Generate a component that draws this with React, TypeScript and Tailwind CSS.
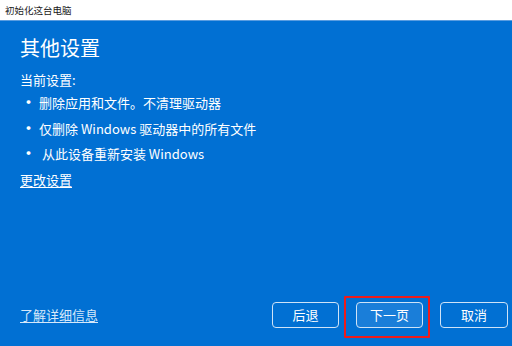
export default function App() {
  const font = { fontFamily: '"Segoe UI", "Noto Sans CJK SC", "Noto Sans", sans-serif' };
  return (
    <div className="flex h-[346px] w-[512px] flex-col overflow-hidden" style={font}>
      <div className="flex h-[20px] items-center bg-white pl-[5px] text-[9.5px] text-[#1a1a1a]">
        初始化这台电脑
      </div>
      <div className="flex flex-1 flex-col border-t border-[#5a9de0] bg-[#0170d3] pl-[20px] pr-[4px] text-white">
        <h1 className="mt-[13px] text-[20px] leading-[28px]">其他设置</h1>
        <div className="mt-[9px] flex flex-col text-[13px] leading-[25.5px]">
          <span className="leading-[18px]">当前设置:</span>
          <span className="mt-[1px]">
            <span className="mr-[3px] ml-[1px] text-[15px] font-bold leading-none">•</span>删除应用和文件。不清理驱动器
          </span>
          <span>
            <span className="mr-[3px] ml-[1px] text-[15px] font-bold leading-none">•</span>仅删除 Windows 驱动器中的所有文件
          </span>
          <span>
            <span className="mr-[3px] ml-[1px] text-[15px] font-bold leading-none">•</span>&nbsp;从此设备重新安装 Windows
          </span>
          <a className="w-fit underline underline-offset-2">更改设置</a>
        </div>
        <div className="mt-auto mb-[18px] flex items-center">
          <a className="text-[13px] text-[#d6e8fa] underline underline-offset-2">了解详细信息</a>
          <div className="ml-auto flex items-center gap-[17px]">
            <button className="h-[26px] w-[67px] rounded-[4px] border border-[#cfe3f7] text-[13px] text-white">
              后退
            </button>
            <div className="relative">
              <button className="block h-[26px] w-[67px] rounded-[4px] border border-[#cfe3f7] bg-[#1a7ed9] text-[13px] text-white">
                下一页
              </button>
              <div className="pointer-events-none absolute left-[-12px] top-[-6px] h-[42px] w-[86px] rounded-[1px] border-2 border-[#ee1c1c]" />
            </div>
            <button className="h-[26px] w-[68px] rounded-[4px] border border-[#cfe3f7] text-[13px] text-white">
              取消
            </button>
          </div>
        </div>
      </div>
    </div>
  );
}
